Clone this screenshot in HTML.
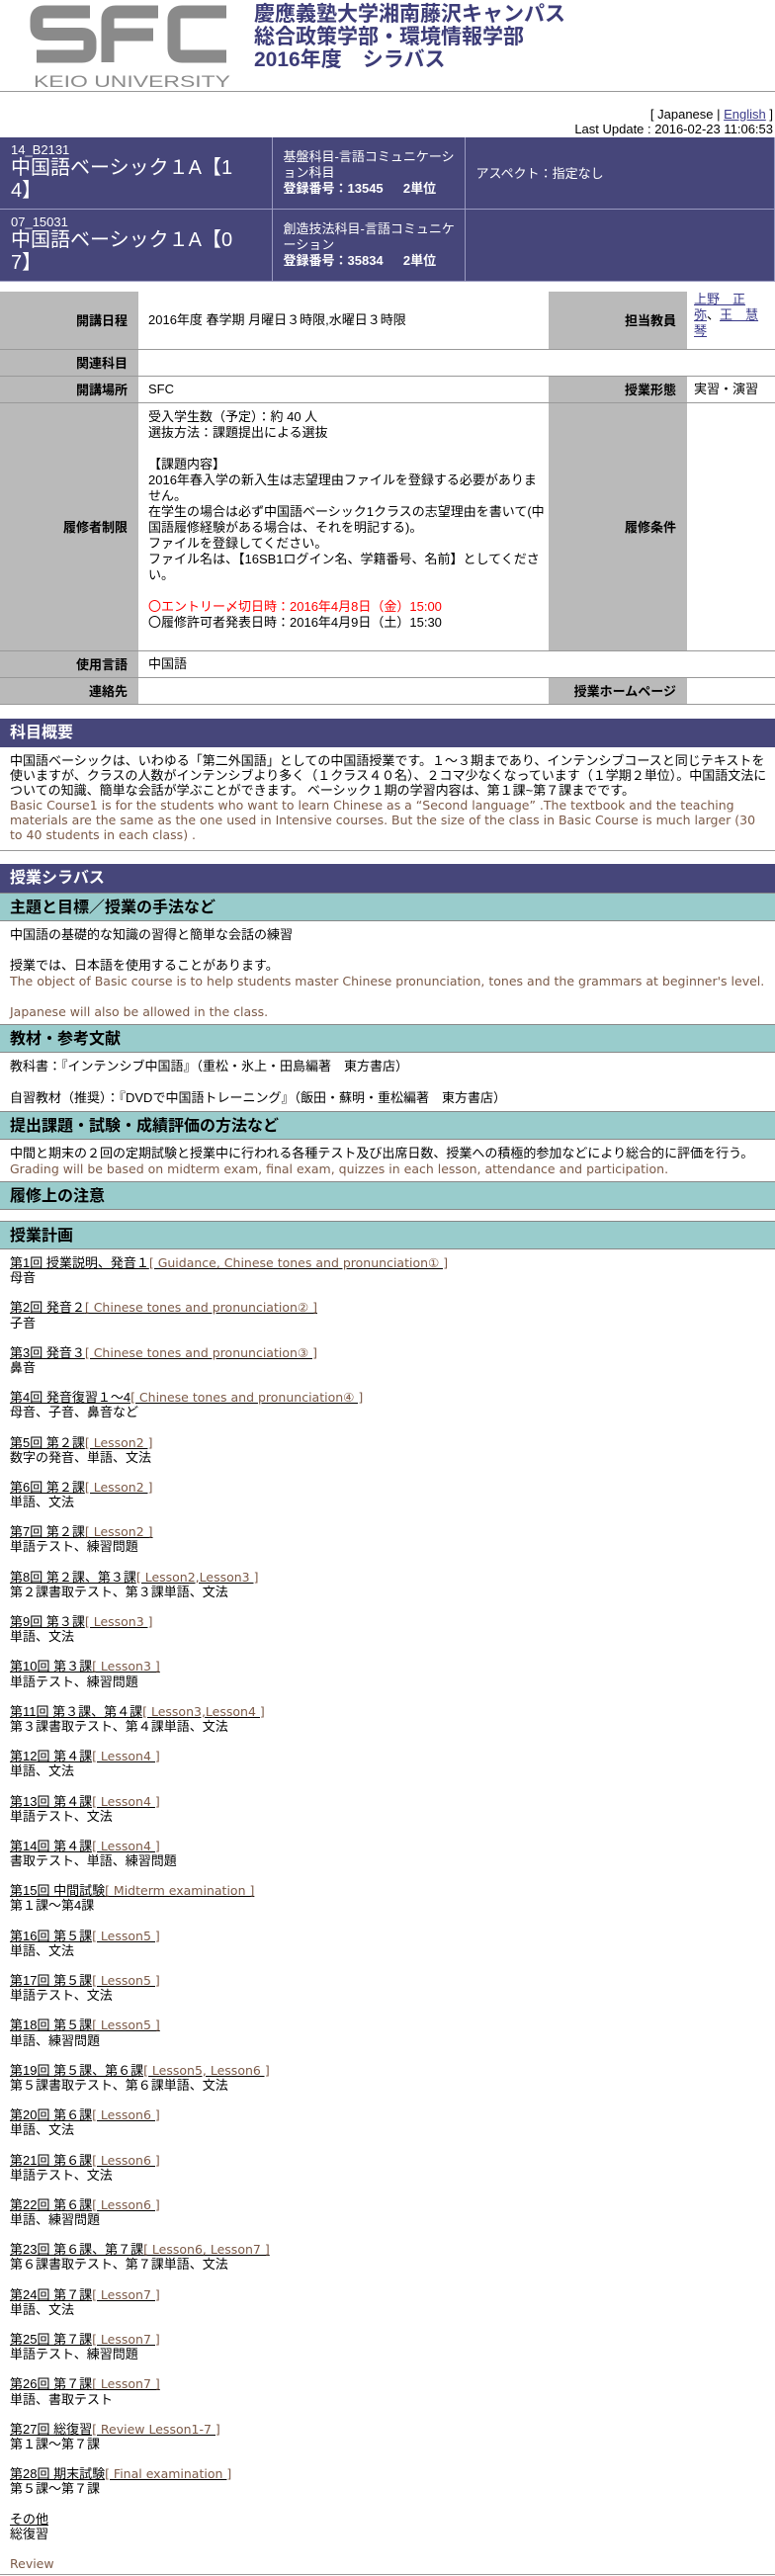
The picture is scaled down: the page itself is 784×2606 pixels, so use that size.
<!DOCTYPE html>
<html><head><meta charset="utf-8">
<style>
*{box-sizing:border-box}
body{margin:0;width:784px;height:2606px;overflow:hidden;background:#fff;font-family:"Liberation Sans","Noto Sans CJK JP",sans-serif;font-size:13px;color:#000;position:relative}
.abs{position:absolute}
.title{left:257px;top:3px;color:#3c3c78;font-weight:bold;font-size:21px;line-height:23px}
.nav{left:0;top:139px;width:784px;background:#46467a;color:#fff}
.nav td{border:1px solid #9a9ac0;border-width:0 1px 1px 0;vertical-align:middle}
table{border-collapse:collapse}
.g td{border-bottom:1px solid #999;padding:0}
.lab{background:#bababa;font-weight:bold;text-align:right;padding-right:11px!important;width:140px}
.val{padding-left:10px!important;line-height:16px}
.bar{left:0;width:784px;height:29px;background:#46467a;color:#fff;font-weight:bold;font-size:16px;line-height:29px;padding-left:10px}
.tbar{left:0;width:784px;height:29px;background:#99cccc;font-weight:bold;font-size:16px;line-height:29px;padding-left:10px;border-top:1px solid #888;border-bottom:1px solid #888}
.en{color:#7b5a48;font-family:"DejaVu Sans","Noto Sans CJK JP",sans-serif;font-size:12.5px}
.txt{left:10px;line-height:15.5px;width:770px}
a{color:#3b3b8a}
.sch{left:10px;top:1270px;line-height:15.13px}
.sch u{text-decoration:underline}
.sch .b{color:#7b5a48;font-family:"DejaVu Sans","Noto Sans CJK JP",sans-serif;font-size:12.5px}
</style></head><body>
<svg class="abs" style="left:0;top:0" width="250" height="92">
<g fill="none" stroke="#8a8a8a" stroke-width="13">
<path d="M91,12 H45 Q37,12 37,20 V27 Q37,34.5 45,34.5 H83 Q91,34.5 91,42 V49 Q91,57 83,57 H37"/>
<path d="M160,12 H117 Q109,12 109,20 V63 M109,35 H155"/>
<path d="M229,12 H184 Q176,12 176,20 V49 Q176,57 184,57 H229"/>
</g>
<text x="34" y="88" font-family="Liberation Sans" font-size="17" fill="#8c8c8c" textLength="199" lengthAdjust="spacingAndGlyphs">KEIO UNIVERSITY</text>
</svg>
<div class="abs title">慶應義塾大学湘南藤沢キャンパス<br>総合政策学部・環境情報学部<br>2016年度　シラバス</div>
<div class="abs" style="left:0;top:92px;width:784px;border-top:1px solid #999"></div>
<div class="abs" style="right:2px;top:108px;text-align:right;font-size:13px;line-height:15px">[ Japanese | <a href="#">English</a> ]<br>Last Update : 2016-02-23 11:06:53</div>

<table class="abs nav">
<tr style="height:72px"><td style="width:275px;padding-left:11px;line-height:23px"><div style="font-size:13px;line-height:14px">14_B2131</div><div style="font-size:20px">中国語ベーシック１A【1<br>4】</div></td>
<td style="width:195px;padding-left:11px;line-height:16px;font-size:13px">基盤科目-言語コミュニケーション科目<br><b>登録番号：13545　&nbsp; 2単位</b></td>
<td style="padding-left:11px;font-size:13px">アスペクト：指定なし</td></tr>
<tr style="height:73px"><td style="padding-left:11px;line-height:23px"><div style="font-size:13px;line-height:14px">07_15031</div><div style="font-size:20px">中国語ベーシック１A【0<br>7】</div></td>
<td style="padding-left:11px;line-height:16px;font-size:13px">創造技法科目-言語コミュニケーション<br><b>登録番号：35834　&nbsp; 2単位</b></td>
<td></td></tr>
</table>

<table class="abs g" style="left:0;top:295px;width:784px">
<tr style="height:58px"><td class="lab">開講日程</td><td class="val" style="width:415px">2016年度 春学期 月曜日３時限,水曜日３時限</td><td class="lab">担当教員</td><td class="val" style="padding-left:7px!important;vertical-align:top"><a href="#">上野　正</a><br><a href="#">弥</a>、<a href="#">王　慧</a><br><a href="#">琴</a></td></tr>
<tr style="height:27px"><td class="lab">関連科目</td><td class="val" colspan="3"></td></tr>
<tr style="height:27px"><td class="lab">開講場所</td><td class="val">SFC</td><td class="lab">授業形態</td><td class="val" style="padding-left:7px!important">実習・演習</td></tr>
<tr style="height:251px"><td class="lab">履修者制限</td><td class="val" style="vertical-align:top;padding-top:6px!important">受入学生数（予定）：約 40 人<br>選抜方法：課題提出による選抜<br><br>【課題内容】<br>2016年春入学の新入生は志望理由ファイルを登録する必要がありません。<br>在学生の場合は必ず中国語ベーシック1クラスの志望理由を書いて(中国語履修経験がある場合は、それを明記する)。<br>ファイルを登録してください。<br>ファイル名は、【16SB1ログイン名、学籍番号、名前】としてください。<br><br><span style="color:#f00">〇エントリー〆切日時：2016年4月8日（金）15:00</span><br>〇履修許可者発表日時：2016年4月9日（土）15:30</td><td class="lab">履修条件</td><td></td></tr>
<tr style="height:27px"><td class="lab">使用言語</td><td class="val" colspan="3">中国語</td></tr>
<tr style="height:27px"><td class="lab">連絡先</td><td class="val"></td><td class="lab">授業ホームページ</td><td></td></tr>
</table>

<div class="abs bar" style="top:727px">科目概要</div>
<div class="abs txt" style="top:762px;line-height:15px">中国語ベーシックは、いわゆる「第二外国語」としての中国語授業です。１～３期まであり、インテンシブコースと同じテキストを使いますが、クラスの人数がインテンシブより多く（１クラス４０名）、２コマ少なくなっています（１学期２単位）。中国語文法についての知識、簡単な会話が学ぶことができます。 ベーシック１期の学習内容は、第１課~第７課までです。<br><span class="en">Basic Course1 is for the students who want to learn Chinese as a “Second language” .The textbook and the teaching materials are the same as the one used in Intensive courses. But the size of the class in Basic Course is much larger (30 to 40 students in each class) .</span></div>
<div class="abs" style="left:0;top:860px;width:784px;border-top:1px solid #999"></div>
<div class="abs bar" style="top:874px">授業シラバス</div>
<div class="abs tbar" style="top:903px">主題と目標／授業の手法など</div>
<div class="abs txt" style="top:938px">中国語の基礎的な知識の習得と簡単な会話の練習<br><br>授業では、日本語を使用することがあります。<br><span class="en">The object of Basic course is to help students master Chinese pronunciation, tones and the grammars at beginner's level.<br><br>Japanese will also be allowed in the class.</span></div>
<div class="abs tbar" style="top:1036px">教材・参考文献</div>
<div class="abs txt" style="top:1071px;line-height:16px">教科書：『インテンシブ中国語』（重松・氷上・田島編著　東方書店）<br><br>自習教材（推奨）：『DVDで中国語トレーニング』（飯田・蘇明・重松編著　東方書店）</div>
<div class="abs tbar" style="top:1124px">提出課題・試験・成績評価の方法など</div>
<div class="abs txt" style="top:1159px;line-height:16px">中間と期末の２回の定期試験と授業中に行われる各種テスト及び出席日数、授業への積極的参加などにより総合的に評価を行う。<br><span class="en">Grading will be based on midterm exam, final exam, quizzes in each lesson, attendance and participation.</span></div>
<div class="abs tbar" style="top:1195px">履修上の注意</div>
<div class="abs tbar" style="top:1235px">授業計画</div>

<div class="abs sch">
<u>第1回 授業説明、発音１<span class="b">[ Guidance, Chinese tones and pronunciation① ]</span></u><br>母音<br><br>
<u>第2回 発音２<span class="b">[ Chinese tones and pronunciation② ]</span></u><br>子音<br><br>
<u>第3回 発音３<span class="b">[ Chinese tones and pronunciation③ ]</span></u><br>鼻音<br><br>
<u>第4回 発音復習１～4<span class="b">[ Chinese tones and pronunciation④ ]</span></u><br>母音、子音、鼻音など<br><br>
<u>第5回 第２課<span class="b">[ Lesson2 ]</span></u><br>数字の発音、単語、文法<br><br>
<u>第6回 第２課<span class="b">[ Lesson2 ]</span></u><br>単語、文法<br><br>
<u>第7回 第２課<span class="b">[ Lesson2 ]</span></u><br>単語テスト、練習問題<br><br>
<u>第8回 第２課、第３課<span class="b">[ Lesson2,Lesson3 ]</span></u><br>第２課書取テスト、第３課単語、文法<br><br>
<u>第9回 第３課<span class="b">[ Lesson3 ]</span></u><br>単語、文法<br><br>
<u>第10回 第３課<span class="b">[ Lesson3 ]</span></u><br>単語テスト、練習問題<br><br>
<u>第11回 第３課、第４課<span class="b">[ Lesson3,Lesson4 ]</span></u><br>第３課書取テスト、第４課単語、文法<br><br>
<u>第12回 第４課<span class="b">[ Lesson4 ]</span></u><br>単語、文法<br><br>
<u>第13回 第４課<span class="b">[ Lesson4 ]</span></u><br>単語テスト、文法<br><br>
<u>第14回 第４課<span class="b">[ Lesson4 ]</span></u><br>書取テスト、単語、練習問題<br><br>
<u>第15回 中間試験<span class="b">[ Midterm examination ]</span></u><br>第１課～第4課<br><br>
<u>第16回 第５課<span class="b">[ Lesson5 ]</span></u><br>単語、文法<br><br>
<u>第17回 第５課<span class="b">[ Lesson5 ]</span></u><br>単語テスト、文法<br><br>
<u>第18回 第５課<span class="b">[ Lesson5 ]</span></u><br>単語、練習問題<br><br>
<u>第19回 第５課、第６課<span class="b">[ Lesson5, Lesson6 ]</span></u><br>第５課書取テスト、第６課単語、文法<br><br>
<u>第20回 第６課<span class="b">[ Lesson6 ]</span></u><br>単語、文法<br><br>
<u>第21回 第６課<span class="b">[ Lesson6 ]</span></u><br>単語テスト、文法<br><br>
<u>第22回 第６課<span class="b">[ Lesson6 ]</span></u><br>単語、練習問題<br><br>
<u>第23回 第６課、第７課<span class="b">[ Lesson6, Lesson7 ]</span></u><br>第６課書取テスト、第７課単語、文法<br><br>
<u>第24回 第７課<span class="b">[ Lesson7 ]</span></u><br>単語、文法<br><br>
<u>第25回 第７課<span class="b">[ Lesson7 ]</span></u><br>単語テスト、練習問題<br><br>
<u>第26回 第７課<span class="b">[ Lesson7 ]</span></u><br>単語、書取テスト<br><br>
<u>第27回 総復習<span class="b">[ Review Lesson1-7 ]</span></u><br>第１課～第７課<br><br>
<u>第28回 期末試験<span class="b">[ Final examination ]</span></u><br>第５課～第７課<br><br>
<u>その他</u><br>総復習<br><br>
<span class="b">Review</span>
</div>
<div class="abs" style="left:0;top:2604px;width:784px;border-top:1px solid #999"></div>
</body></html>
